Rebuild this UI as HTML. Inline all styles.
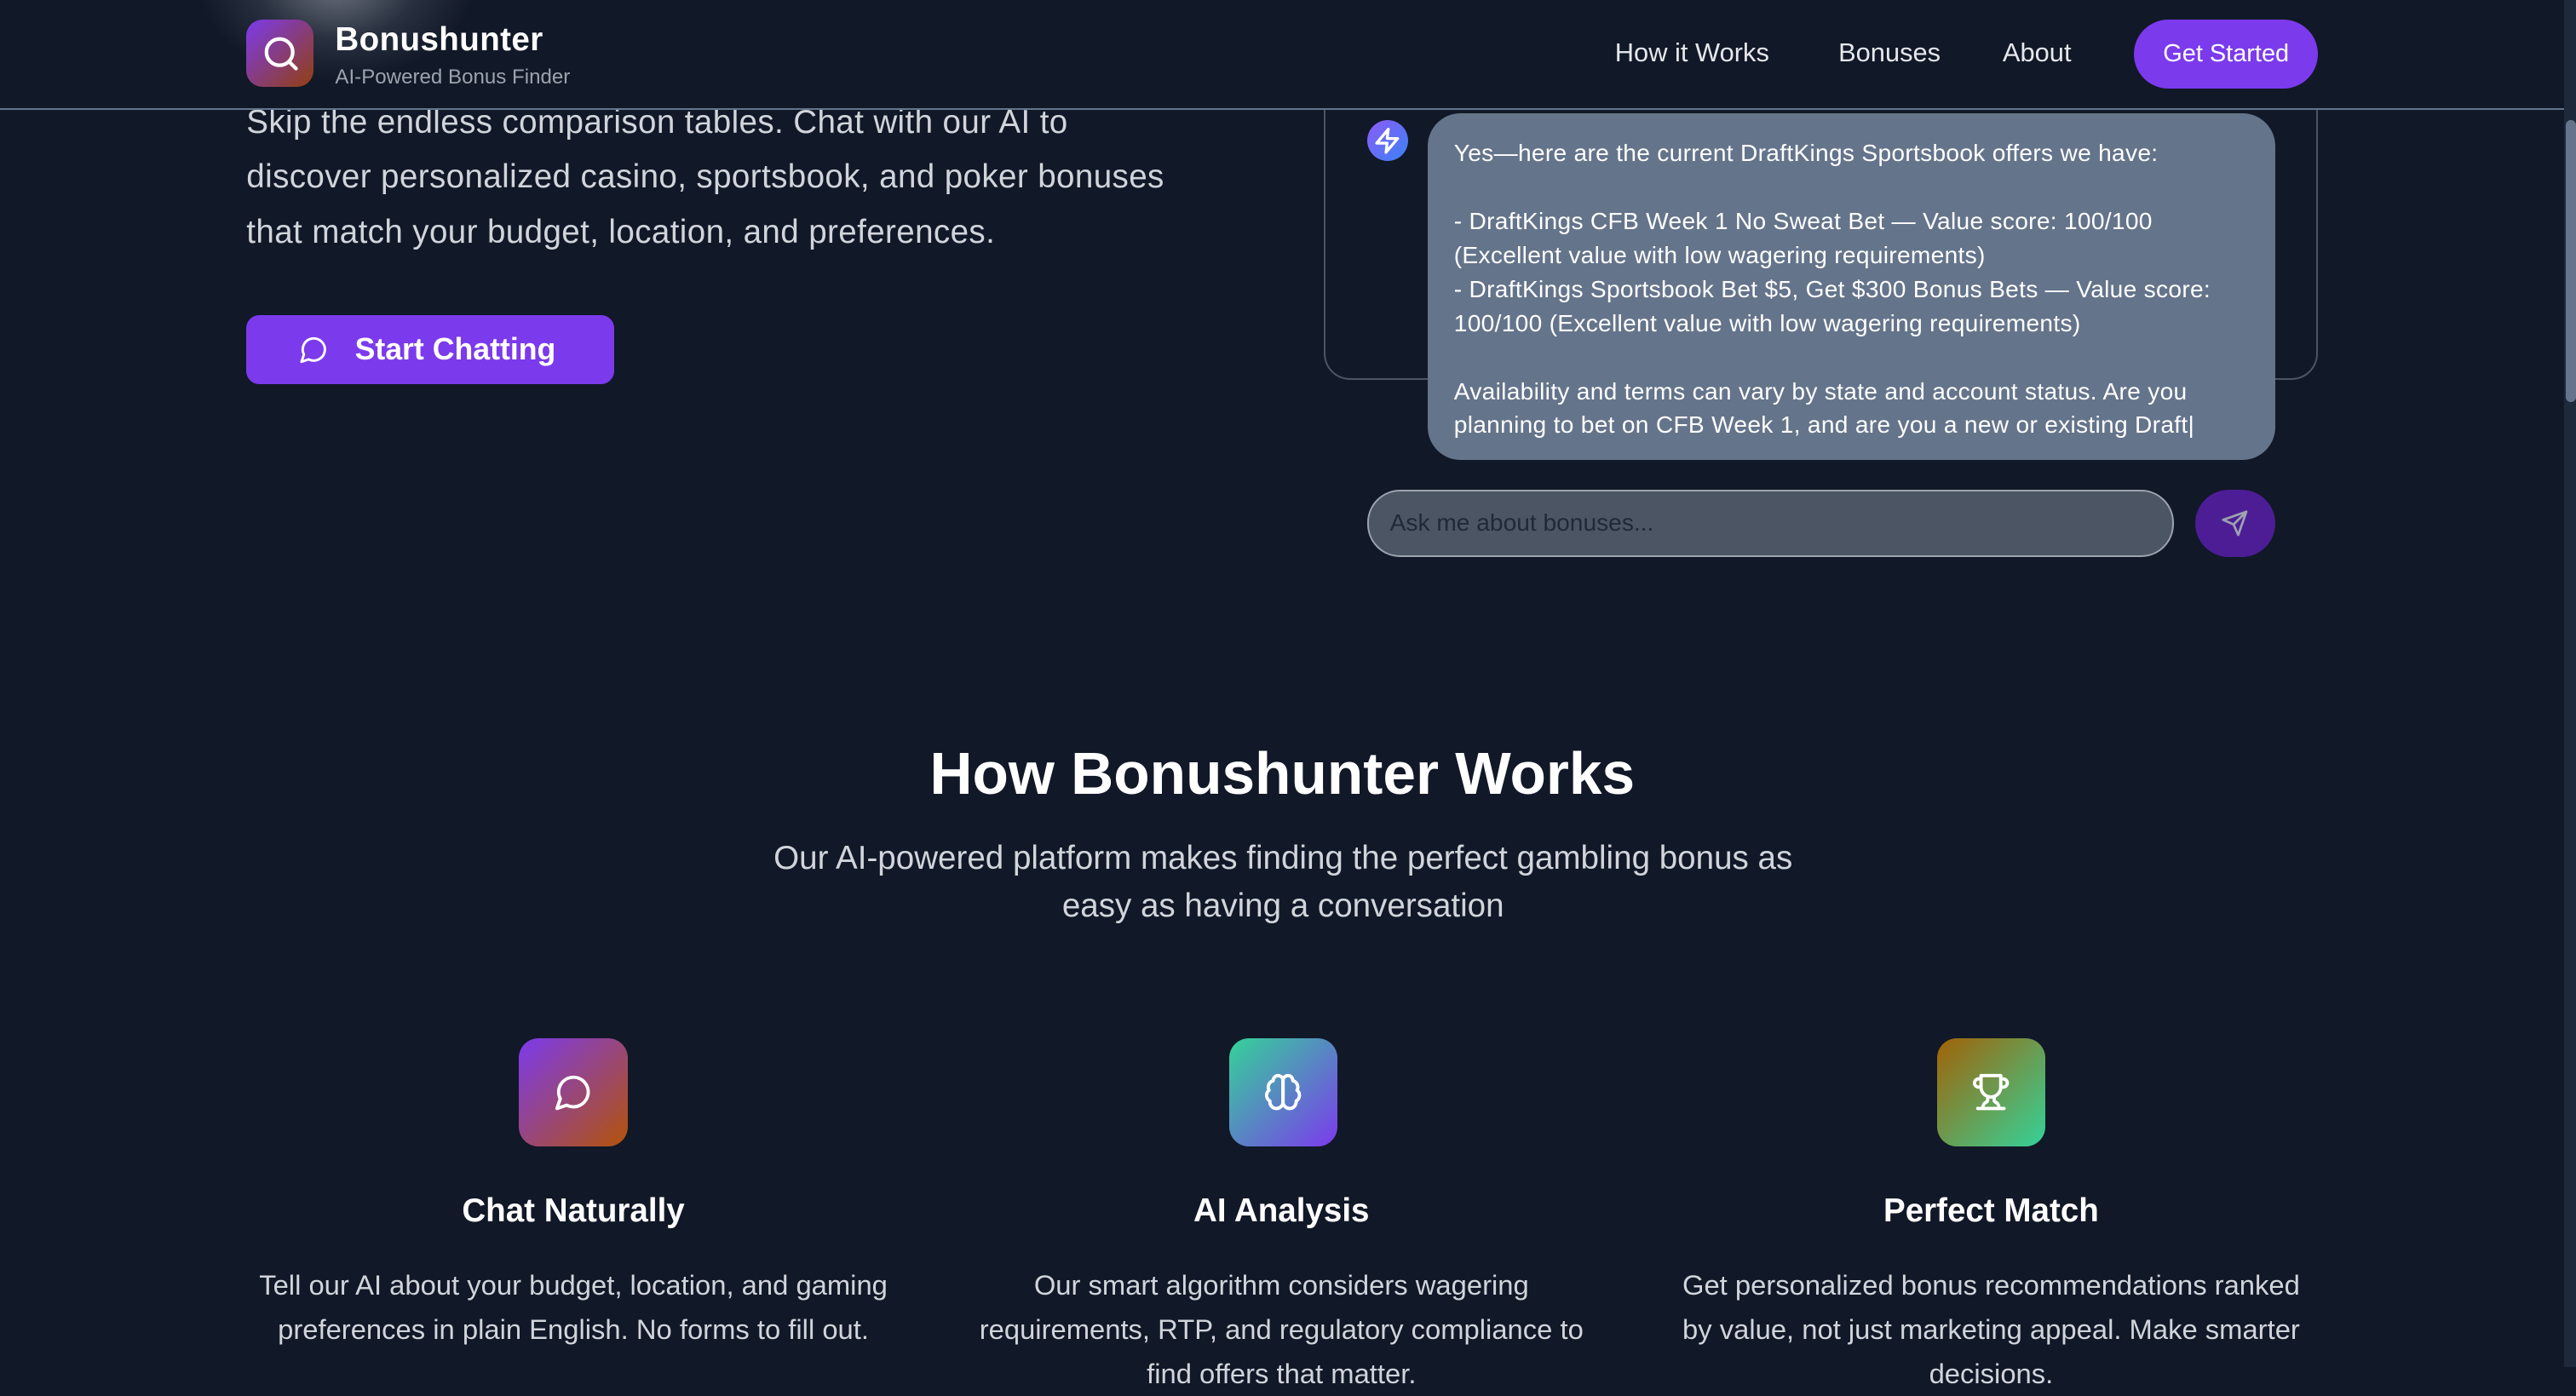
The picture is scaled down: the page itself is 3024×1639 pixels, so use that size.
<!DOCTYPE html>
<html><head><meta charset="utf-8">
<style>
html,body{margin:0;padding:0;}
body{width:1568px;height:832px;zoom:1.928571;background:#111827;font-family:"Liberation Sans",sans-serif;color:#fff;position:relative;overflow:hidden;}
.abs{position:absolute;}
.glow{left:120px;top:-70px;width:170px;height:120px;border-radius:50%;background:radial-gradient(ellipse at center,rgba(200,205,215,0.5) 0%,rgba(150,160,175,0.18) 40%,rgba(17,24,39,0) 70%);}
.nav{left:0;top:0;width:1561px;height:66px;border-bottom:1.5px solid #64748b;background:#111827;}
.logo{left:150px;top:12px;width:41px;height:41px;border-radius:10px;background:linear-gradient(135deg,#7c3aed,#92400e);}
.t1{left:204px;top:13px;font-size:20px;font-weight:bold;letter-spacing:0.2px;}
.t2{left:204px;top:40px;font-size:12.5px;color:#9ca3af;}
.nl{top:23px;font-size:16px;color:#e5e7eb;}
.gs{left:1299px;top:12px;width:112px;height:42px;border-radius:21px;background:#7c3aed;font-size:15px;line-height:42px;text-align:center;}
.hero{left:150px;top:58px;width:565px;font-size:20px;line-height:33.5px;color:#d1d5db;letter-spacing:0.2px;}
.sc{left:150px;top:192px;width:224px;height:42px;border-radius:8px;background:#7c3aed;}
.sc span{position:absolute;left:66px;top:10px;font-size:18.5px;font-weight:bold;}
.card{left:806px;top:20px;width:603px;height:210px;border:1.2px solid #4b5563;border-top:none;border-radius:0 0 16px 16px;}
.av{left:832px;top:73px;width:25px;height:25px;border-radius:50%;background:linear-gradient(135deg,#8b5cf6,#3b82f6);}
.bub{left:869px;top:69px;width:484px;height:181px;padding:14px 16px 16px;border-radius:20px;background:#64748b;font-size:14.6px;line-height:20.7px;color:#fff;letter-spacing:0.15px;}
.inp{left:832px;top:298px;width:489px;height:39px;border-radius:20px;background:#4b5563;border:1.3px solid #9ca3af;}
.inp span{position:absolute;left:13px;top:11px;font-size:14.6px;color:#1f2937;}
.send{left:1336px;top:298px;width:49px;height:41px;border-radius:21px;background:#4c1d95;}
.h2{left:0;width:1561px;top:450px;text-align:center;font-size:36px;font-weight:bold;}
.sub{left:451px;width:660px;top:508px;text-align:center;font-size:20px;line-height:29px;color:#d1d5db;}
.ic{top:632px;width:66px;height:66px;border-radius:12px;}
.ft{top:726px;width:400px;text-align:center;font-size:20px;font-weight:bold;}
.fd{top:769px;width:396px;text-align:center;font-size:17px;line-height:27px;color:#d1d5db;}
.sb{left:1561px;top:0;width:7px;height:832px;background:#1e293b;}
.th{left:1562px;top:73px;width:6px;height:172px;border-radius:3px;background:#64748b;}
</style></head><body>
<div class="abs hero">Skip the endless comparison tables. Chat with our AI to discover personalized casino, sportsbook, and poker bonuses that match your budget, location, and preferences.</div>
<div class="abs sc"><svg class="abs" style="left:32px;top:12px" width="18" height="18" viewBox="0 0 24 24" fill="none" stroke="#fff" stroke-width="2" stroke-linecap="round" stroke-linejoin="round"><path d="M7.9 20A9 9 0 1 0 4 16.1L2 22Z"/></svg><span>Start Chatting</span></div>
<div class="abs card"></div>
<div class="abs av"><svg class="abs" style="left:4px;top:3px" width="17" height="19" viewBox="0 0 24 24" fill="none" stroke="#fff" stroke-width="2.4" stroke-linejoin="round"><path d="M13 2 3 14h9l-1 8 10-12h-9l1-8z"/></svg></div>
<div class="abs bub">Yes—here are the current DraftKings Sportsbook offers we have:<br><br>- DraftKings CFB Week 1 No Sweat Bet — Value score: 100/100 (Excellent value with low wagering requirements)<br>- DraftKings Sportsbook Bet $5, Get $300 Bonus Bets — Value score: 100/100 (Excellent value with low wagering requirements)<br><br>Availability and terms can vary by state and account status. Are you planning to bet on CFB Week 1, and are you a new or existing Draft|</div>
<div class="abs inp"><span>Ask me about bonuses...</span></div>
<div class="abs send"><svg class="abs" style="left:16px;top:12px" width="17" height="17" viewBox="0 0 24 24" fill="none" stroke="#9ca3af" stroke-width="2" stroke-linejoin="round"><path d="M22 2 11 13M22 2l-7 20-4-9-9-4z"/></svg></div>

<div class="abs nav"></div>
<div class="abs glow"></div>
<div class="abs logo"><svg class="abs" style="left:9px;top:9px" width="24" height="24" viewBox="0 0 24 24" fill="none" stroke="#fff" stroke-width="2.2" stroke-linecap="round"><circle cx="11" cy="11" r="8"/><path d="m21 21-4.3-4.3"/></svg></div>
<div class="abs t1">Bonushunter</div>
<div class="abs t2">AI-Powered Bonus Finder</div>
<div class="abs nl" style="left:983px">How it Works</div>
<div class="abs nl" style="left:1119px">Bonuses</div>
<div class="abs nl" style="left:1219px">About</div>
<div class="abs gs">Get Started</div>

<div class="abs h2">How Bonushunter Works</div>
<div class="abs sub">Our AI-powered platform makes finding the perfect gambling bonus as easy as having a conversation</div>

<div class="abs ic" style="left:316px;background:linear-gradient(135deg,#7c3aed,#b45309)"><svg class="abs" style="left:21px;top:21px" width="24" height="24" viewBox="0 0 24 24" fill="none" stroke="#fff" stroke-width="2" stroke-linecap="round" stroke-linejoin="round"><path d="M7.9 20A9 9 0 1 0 4 16.1L2 22Z"/></svg></div>
<div class="abs ic" style="left:748px;background:linear-gradient(135deg,#34d399,#7c3aed)"><svg class="abs" style="left:21px;top:21px" width="24" height="24" viewBox="0 0 24 24" fill="none" stroke="#fff" stroke-width="2" stroke-linecap="round" stroke-linejoin="round"><path d="M12 5a3 3 0 1 0-5.997.125 4 4 0 0 0-2.526 5.77 4 4 0 0 0 .556 6.588A4 4 0 1 0 12 18Z"/><path d="M12 5a3 3 0 1 1 5.997.125 4 4 0 0 1 2.526 5.770 4 4 0 0 1-.556 6.588A4 4 0 1 1 12 18Z"/><path d="M12 5v13"/></svg></div>
<div class="abs ic" style="left:1179px;background:linear-gradient(135deg,#a16207,#34d399)"><svg class="abs" style="left:21px;top:21px" width="24" height="24" viewBox="0 0 24 24" fill="none" stroke="#fff" stroke-width="2" stroke-linecap="round" stroke-linejoin="round"><path d="M6 9H4.5a2.5 2.5 0 0 1 0-5H6M18 9h1.5a2.5 2.5 0 0 0 0-5H18M4 22h16M10 14.66V17c0 .55-.47.98-.97 1.21C7.85 18.75 7 20.24 7 22M14 14.66V17c0 .55.47.98.97 1.21C16.15 18.75 17 20.24 17 22M18 2H6v7a6 6 0 0 0 12 0V2Z"/></svg></div>

<div class="abs ft" style="left:149px">Chat Naturally</div>
<div class="abs ft" style="left:580px">AI Analysis</div>
<div class="abs ft" style="left:1012px">Perfect Match</div>
<div class="abs fd" style="left:151px">Tell our AI about your budget, location, and gaming preferences in plain English. No forms to fill out.</div>
<div class="abs fd" style="left:582px">Our smart algorithm considers wagering requirements, RTP, and regulatory compliance to find offers that matter.</div>
<div class="abs fd" style="left:1014px">Get personalized bonus recommendations ranked by value, not just marketing appeal. Make smarter decisions.</div>

<div class="abs sb"></div>
<div class="abs th"></div>
</body></html>
